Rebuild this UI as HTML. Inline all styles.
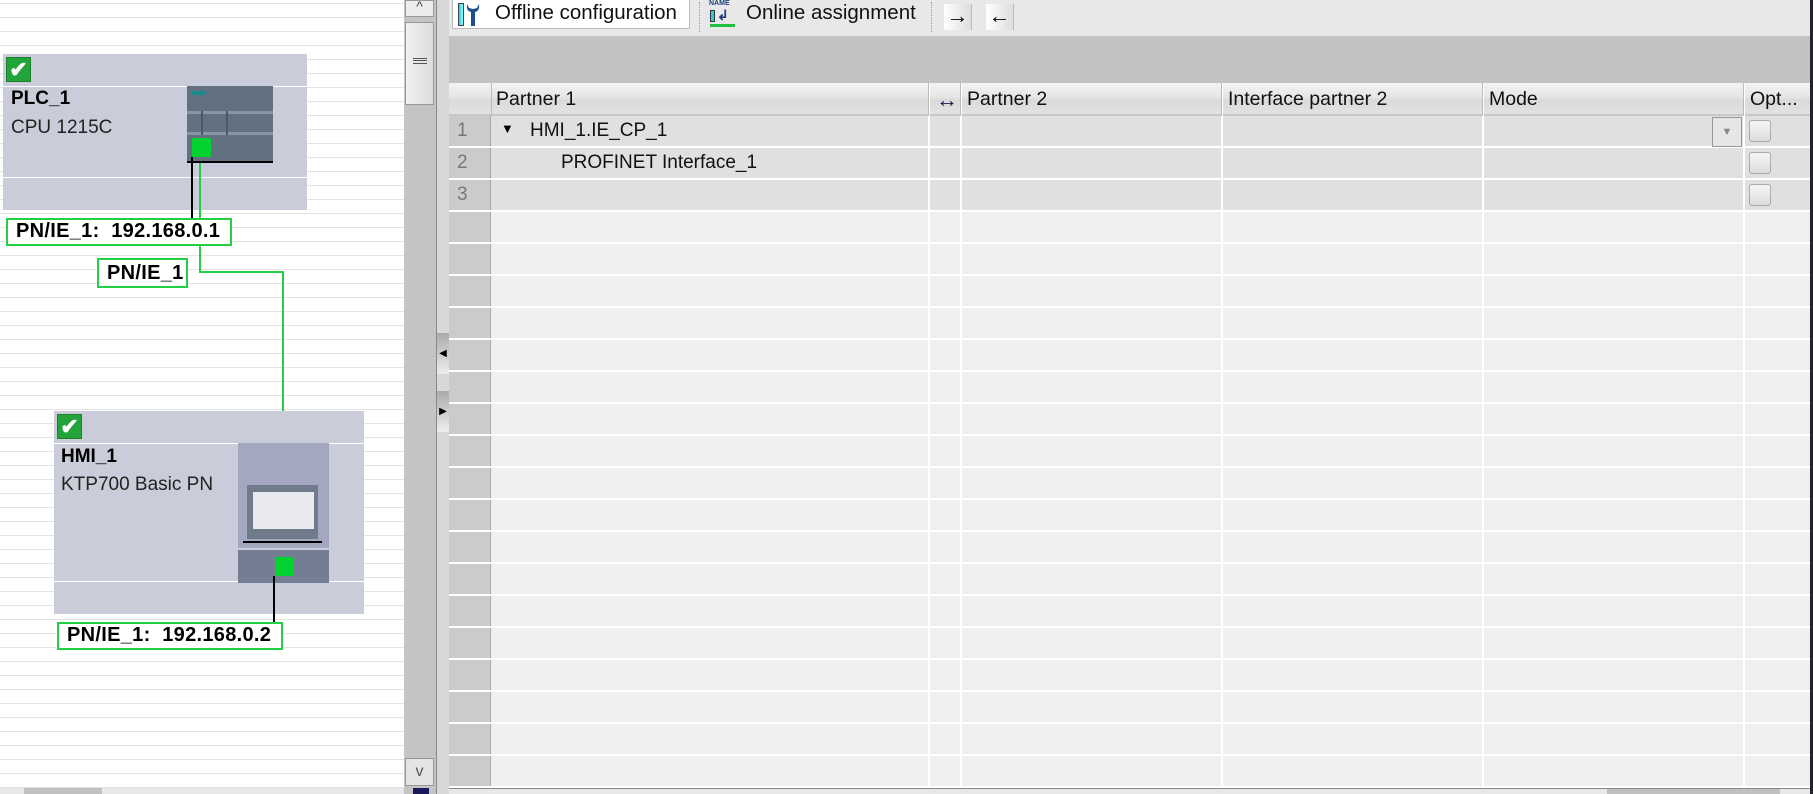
<!DOCTYPE html>
<html><head><meta charset="utf-8"><style>
*{margin:0;padding:0;box-sizing:border-box}
body{width:1813px;height:794px;position:relative;overflow:hidden;background:#fff;font-family:"Liberation Sans",sans-serif;color:#000}
.a{position:absolute}
.lbl{position:absolute;background:#fff;border:2px solid #22d043;font-weight:bold;font-size:20px;line-height:23px;padding-left:8px;white-space:nowrap;letter-spacing:0.3px}
.hc{position:absolute;top:83px;height:33px;font-size:19.5px;line-height:33px;padding-left:6px;color:#111;white-space:nowrap}
.cb{position:absolute;left:1749px;width:22px;height:22px;border:1px solid #aaa;border-radius:3px;background:linear-gradient(#f6f6f6,#dcdcdc)}
.t{font-size:19px;color:#111}
</style></head><body>
<div class="a" style="left:0;top:0;width:404px;height:788px;background:repeating-linear-gradient(to bottom,transparent 0,transparent 3px,#e4e4e4 3px,#e4e4e4 4px,transparent 4px,transparent 14px);background-size:100% 14px"></div>
<div class="a" style="left:3px;top:54px;width:304px;height:156px;background:#cacdd9"></div>
<div class="a" style="left:3px;top:86px;width:304px;height:1px;background:#fff"></div>
<div class="a" style="left:3px;top:177px;width:304px;height:1px;background:#fff"></div>
<div class="a" style="left:6px;top:57px;width:25px;height:25px;background:#22a43a;border:1px solid #1b7f2c;color:#fff;font-size:22px;line-height:24px;text-align:center;font-weight:bold">✔</div>
<div class="a" style="left:11px;top:88px;font-size:19px;font-weight:bold">PLC_1</div>
<div class="a" style="left:11px;top:117px;font-size:19px;color:#222">CPU 1215C</div>
<div class="a" style="left:187px;top:86px;width:86px;height:76px;background:#637080"></div>
<div class="a" style="left:192px;top:91px;width:14px;height:4px;background:#1a8a8a"></div>
<div class="a" style="left:187px;top:111px;width:86px;height:3px;background:#8a95a3"></div>
<div class="a" style="left:187px;top:132px;width:86px;height:3px;background:#8a95a3"></div>
<div class="a" style="left:201px;top:111px;width:2px;height:24px;background:#4c5868"></div>
<div class="a" style="left:226px;top:111px;width:2px;height:24px;background:#4c5868"></div>
<div class="a" style="left:192px;top:138px;width:19px;height:19px;background:#00d32f"></div>
<div class="a" style="left:187px;top:161px;width:86px;height:2px;background:#000"></div>
<div class="a" style="left:191px;top:157px;width:2px;height:61px;background:#000"></div>
<div class="a" style="left:199px;top:163px;width:2px;height:110px;background:#22d043"></div>
<div class="a" style="left:199px;top:271px;width:85px;height:2px;background:#22d043"></div>
<div class="a" style="left:282px;top:271px;width:2px;height:172px;background:#22d043"></div>
<div class="lbl" style="left:6px;top:218px;width:226px;height:28px">PN/IE_1:&nbsp; 192.168.0.1</div>
<div class="lbl" style="left:97px;top:258px;width:91px;height:30px;line-height:26px">PN/IE_1</div>
<div class="a" style="left:54px;top:411px;width:310px;height:203px;background:#cacdd9"></div>
<div class="a" style="left:54px;top:443px;width:310px;height:1px;background:#fff"></div>
<div class="a" style="left:54px;top:581px;width:310px;height:1px;background:#fff"></div>
<div class="a" style="left:57px;top:414px;width:25px;height:25px;background:#22a43a;border:1px solid #1b7f2c;color:#fff;font-size:22px;line-height:24px;text-align:center;font-weight:bold">✔</div>
<div class="a" style="left:61px;top:446px;font-size:19px;font-weight:bold">HMI_1</div>
<div class="a" style="left:61px;top:474px;font-size:19px;color:#222">KTP700 Basic PN</div>
<div class="a" style="left:238px;top:443px;width:91px;height:105px;background:#a3a8c0"></div>
<div class="a" style="left:247px;top:485px;width:71px;height:54px;background:#6f7a8a"></div>
<div class="a" style="left:253px;top:492px;width:61px;height:37px;background:#e9eaef"></div>
<div class="a" style="left:243px;top:541px;width:79px;height:2px;background:#000"></div>
<div class="a" style="left:238px;top:550px;width:91px;height:33px;background:#737e94"></div>
<div class="a" style="left:275px;top:557px;width:19px;height:19px;background:#00d32f"></div>
<div class="a" style="left:273px;top:576px;width:2px;height:47px;background:#000"></div>
<div class="lbl" style="left:57px;top:622px;width:226px;height:28px">PN/IE_1:&nbsp; 192.168.0.2</div>
<div class="a" style="left:0;top:788px;width:404px;height:6px;background:#e8e8e8"></div>
<div class="a" style="left:24px;top:788px;width:78px;height:6px;background:#c0c0c0"></div>
<div class="a" style="left:404px;top:0;width:32px;height:794px;background:#c4c4c4"></div>
<div class="a" style="left:405px;top:0;width:29px;height:17px;background:#ececec;border:1px solid #999;font-size:14px;text-align:center;color:#444;line-height:10px">^</div>
<div class="a" style="left:405px;top:22px;width:29px;height:83px;background:linear-gradient(90deg,#f0f0f0,#dcdcdc);border:1px solid #999"></div>
<div class="a" style="left:413px;top:58px;width:14px;height:6px;border-top:1px solid #555;border-bottom:1px solid #555"></div>
<div class="a" style="left:413px;top:60px;width:14px;height:1px;background:#555"></div>
<div class="a" style="left:405px;top:758px;width:29px;height:28px;background:#e4e4e4;border:1px solid #999;text-align:center;font-size:16px;color:#555;line-height:26px">v</div>
<div class="a" style="left:413px;top:788px;width:16px;height:6px;background:#1a1a5a"></div>
<div class="a" style="left:436px;top:0;width:13px;height:794px;background:#d8d8d8;border-left:1px solid #888"></div>
<div class="a" style="left:437px;top:333px;width:12px;height:41px;background:linear-gradient(#aaa,#eee);font-size:10px;line-height:41px;text-align:center">◀</div>
<div class="a" style="left:437px;top:391px;width:12px;height:41px;background:linear-gradient(#aaa,#eee);font-size:10px;line-height:41px;text-align:center">▶</div>
<div class="a" style="left:449px;top:0;width:1364px;height:36px;background:#e8e8e8"></div>
<div class="a" style="left:452px;top:0;width:238px;height:29px;background:#fff;border:1px solid #bbb;border-top:none"></div>
<div class="a" style="left:458px;top:3px;width:6px;height:23px;background:linear-gradient(90deg,#3cc,#8ff);border:1px solid #445"></div>
<svg class="a" style="left:465px;top:2px" width="16" height="25"><path d="M2 2 Q1 9 6 10 L6 24 L10 24 L10 10 Q15 9 14 2 L12 6 L8 7 L4 6 Z" fill="#1d4f8f"/></svg>
<div class="a" style="left:495px;top:1px;font-size:20.5px;color:#111">Offline configuration</div>
<div class="a" style="left:699px;top:2px;height:30px;border-left:1px dotted #999"></div>
<div class="a" style="left:709px;top:0;font-size:7px;font-weight:bold;color:#1d3f7f">NAME</div>
<div class="a" style="left:710px;top:10px;width:5px;height:12px;background:#3cc;border:1px solid #334"></div>
<div class="a" style="left:717px;top:7px;font-size:14px;color:#1d3f7f;font-weight:bold">↲</div>
<div class="a" style="left:710px;top:24px;width:25px;height:3px;background:#22c040"></div>
<div class="a" style="left:746px;top:1px;font-size:20.5px;color:#111">Online assignment</div>
<div class="a" style="left:931px;top:2px;height:30px;border-left:1px dotted #999"></div>
<div class="a" style="left:944px;top:4px;width:28px;height:26px;background:linear-gradient(90deg,#fff,#ddd);border-right:1px solid #bbb;font-size:22px;line-height:24px;font-weight:bold;text-align:center">→</div>
<div class="a" style="left:986px;top:4px;width:28px;height:26px;background:linear-gradient(90deg,#fff,#ddd);border-right:1px solid #bbb;font-size:22px;line-height:24px;font-weight:bold;text-align:center">←</div>
<div class="a" style="left:449px;top:36px;width:1364px;height:47px;background:#c2c2c2"></div>
<div class="a" style="left:449px;top:83px;width:1364px;height:705px;background:#efefef"></div>
<div class="a" style="left:491px;top:116px;width:1322px;height:96px;background:#e0e0e0"></div>
<div class="a" style="left:449px;top:83px;width:42px;height:705px;background:#cbcbcb;border-right:1px solid #aaa"></div>
<div class="a" style="left:449px;top:83px;width:1364px;height:33px;background:linear-gradient(#f4f4f4,#e6e6e6 45%,#dadada 55%,#e2e2e2);border-bottom:2px solid #c8c8c8"></div>
<div class="a" style="left:449px;top:116px;width:1364px;height:672px;background:repeating-linear-gradient(to bottom,transparent 0,transparent 30px,#fff 30px,#fff 32px)"></div>
<div class="a" style="left:928px;top:83px;width:2px;height:705px;background:#fff"></div>
<div class="a" style="left:960px;top:83px;width:2px;height:705px;background:#fff"></div>
<div class="a" style="left:1221px;top:83px;width:2px;height:705px;background:#fff"></div>
<div class="a" style="left:1482px;top:83px;width:2px;height:705px;background:#fff"></div>
<div class="a" style="left:1743px;top:83px;width:2px;height:705px;background:#fff"></div>
<div class="a" style="left:928px;top:83px;width:1px;height:33px;background:#bbb"></div>
<div class="a" style="left:960px;top:83px;width:1px;height:33px;background:#bbb"></div>
<div class="a" style="left:1221px;top:83px;width:1px;height:33px;background:#bbb"></div>
<div class="a" style="left:1482px;top:83px;width:1px;height:33px;background:#bbb"></div>
<div class="a" style="left:1743px;top:83px;width:1px;height:33px;background:#bbb"></div>
<div class="a" style="left:491px;top:83px;width:1px;height:33px;background:#bbb"></div>
<div class="hc" style="left:490px">Partner 1</div>
<div class="hc" style="left:930px;font-weight:bold;color:#1a1a4a;font-size:22px">↔</div>
<div class="hc" style="left:961px">Partner 2</div>
<div class="hc" style="left:1222px">Interface partner 2</div>
<div class="hc" style="left:1483px">Mode</div>
<div class="hc" style="left:1744px">Opt...</div>
<div class="a t" style="left:457px;top:120px;color:#777">1</div>
<div class="a t" style="left:457px;top:152px;color:#777">2</div>
<div class="a t" style="left:457px;top:184px;color:#777">3</div>
<div class="a" style="left:501px;top:121px;font-size:13px">▼</div>
<div class="a t" style="left:530px;top:120px">HMI_1.IE_CP_1</div>
<div class="a t" style="left:561px;top:152px">PROFINET Interface_1</div>
<div class="a" style="left:1712px;top:117px;width:30px;height:30px;border:1px solid #999;background:#e6e6e6;color:#888;font-size:11px;text-align:center;line-height:28px">▼</div>
<div class="cb" style="top:120px"></div>
<div class="cb" style="top:152px"></div>
<div class="cb" style="top:184px"></div>
<div class="a" style="left:449px;top:788px;width:1364px;height:6px;background:#e8e8e8;border-top:1px solid #888"></div>
<div class="a" style="left:1607px;top:789px;width:173px;height:5px;background:#c0c0c0"></div>
<div class="a" style="left:1810px;top:0;width:3px;height:794px;background:#223"></div>
</body></html>
